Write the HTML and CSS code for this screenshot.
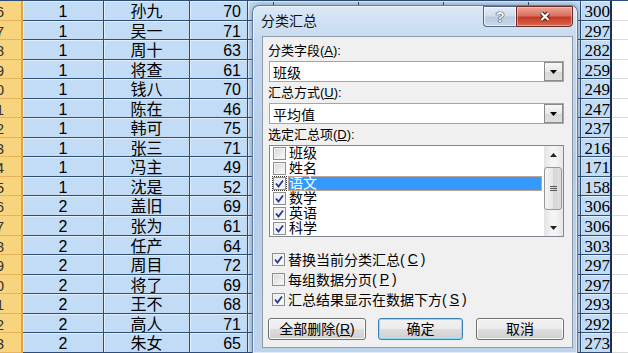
FILE: index.html
```html
<!DOCTYPE html>
<html lang="zh-CN">
<head>
    <meta charset="UTF-8">
    <title>分类汇总</title>
    <link rel="stylesheet" href="styles.css">
</head>
<body>
    <div class="sheet">
        <div class="rh">16</div><div class="c-num">1</div><div class="c-name">孙九</div><div class="c-score">70</div><div class="c-fill"></div><div class="c-total">300</div><div class="c-blank"></div>
        <div class="rh">17</div><div class="c-num">1</div><div class="c-name">吴一</div><div class="c-score">71</div><div class="c-fill"></div><div class="c-total">297</div><div class="c-blank"></div>
        <div class="rh">18</div><div class="c-num">1</div><div class="c-name">周十</div><div class="c-score">63</div><div class="c-fill"></div><div class="c-total">282</div><div class="c-blank"></div>
        <div class="rh">19</div><div class="c-num">1</div><div class="c-name">将查</div><div class="c-score">61</div><div class="c-fill"></div><div class="c-total">259</div><div class="c-blank"></div>
        <div class="rh">20</div><div class="c-num">1</div><div class="c-name">钱八</div><div class="c-score">70</div><div class="c-fill"></div><div class="c-total">249</div><div class="c-blank"></div>
        <div class="rh">21</div><div class="c-num">1</div><div class="c-name">陈在</div><div class="c-score">46</div><div class="c-fill"></div><div class="c-total">247</div><div class="c-blank"></div>
        <div class="rh">22</div><div class="c-num">1</div><div class="c-name">韩可</div><div class="c-score">75</div><div class="c-fill"></div><div class="c-total">237</div><div class="c-blank"></div>
        <div class="rh">23</div><div class="c-num">1</div><div class="c-name">张三</div><div class="c-score">71</div><div class="c-fill"></div><div class="c-total">216</div><div class="c-blank"></div>
        <div class="rh">24</div><div class="c-num">1</div><div class="c-name">冯主</div><div class="c-score">49</div><div class="c-fill"></div><div class="c-total">171</div><div class="c-blank"></div>
        <div class="rh">25</div><div class="c-num">1</div><div class="c-name">沈是</div><div class="c-score">52</div><div class="c-fill"></div><div class="c-total">158</div><div class="c-blank"></div>
        <div class="rh">26</div><div class="c-num">2</div><div class="c-name">盖旧</div><div class="c-score">69</div><div class="c-fill"></div><div class="c-total">306</div><div class="c-blank"></div>
        <div class="rh">27</div><div class="c-num">2</div><div class="c-name">张为</div><div class="c-score">61</div><div class="c-fill"></div><div class="c-total">306</div><div class="c-blank"></div>
        <div class="rh">28</div><div class="c-num">2</div><div class="c-name">任产</div><div class="c-score">64</div><div class="c-fill"></div><div class="c-total">303</div><div class="c-blank"></div>
        <div class="rh">29</div><div class="c-num">2</div><div class="c-name">周目</div><div class="c-score">72</div><div class="c-fill"></div><div class="c-total">297</div><div class="c-blank"></div>
        <div class="rh">30</div><div class="c-num">2</div><div class="c-name">将了</div><div class="c-score">69</div><div class="c-fill"></div><div class="c-total">297</div><div class="c-blank"></div>
        <div class="rh">31</div><div class="c-num">2</div><div class="c-name">王不</div><div class="c-score">68</div><div class="c-fill"></div><div class="c-total">293</div><div class="c-blank"></div>
        <div class="rh">32</div><div class="c-num">2</div><div class="c-name">高人</div><div class="c-score">71</div><div class="c-fill"></div><div class="c-total">292</div><div class="c-blank"></div>
        <div class="rh">33</div><div class="c-num">2</div><div class="c-name">朱女</div><div class="c-score">65</div><div class="c-fill"></div><div class="c-total">273</div><div class="c-blank"></div>
        <div class="rh"></div><div class="c-num"></div><div class="c-name"></div><div class="c-score"></div><div class="c-fill"></div><div class="c-total"></div><div class="c-blank"></div>
    </div>

    <div class="dialog">
        <div class="titlebar">
            <span class="title">分类汇总</span>
            <div class="caption">
                <span class="cap-help">?</span>
                <span class="cap-close">
                    <svg width="14" height="11" viewBox="0 0 14 11">
                        <path d="M3.5 2 L10.5 9 M10.5 2 L3.5 9" stroke="#4a1a12" stroke-width="4.2" fill="none"/>
                        <path d="M3.5 2 L10.5 9 M10.5 2 L3.5 9" stroke="#fff" stroke-width="2.2" fill="none"/>
                    </svg>
                </span>
            </div>
        </div>
        <div class="client">
            <div class="field-label first">分类字段(<u>A</u>):</div>
            <div class="combo">
                <span>班级</span>
                <span class="drop"><svg width="7" height="4" viewBox="0 0 7 4"><path d="M0 0 H7 L3.5 4 Z" fill="#000"/></svg></span>
            </div>
            <div class="field-label">汇总方式(<u>U</u>):</div>
            <div class="combo">
                <span>平均值</span>
                <span class="drop"><svg width="7" height="4" viewBox="0 0 7 4"><path d="M0 0 H7 L3.5 4 Z" fill="#000"/></svg></span>
            </div>
            <div class="field-label">选定汇总项(<u>D</u>):</div>
            <div class="listbox">
                <ul class="items">
                    <li><span class="cb"></span><span class="txt">班级</span></li>
                    <li><span class="cb"></span><span class="txt">姓名</span></li>
                    <li class="sel"><span class="cb on"><svg width="11" height="11" viewBox="0 0 11 11"><path d="M2 5.5 L4.5 8.5 L9 2.5" stroke="#23389a" stroke-width="1.8" fill="none"/></svg></span><span class="txt">语文</span></li>
                    <li><span class="cb on"><svg width="11" height="11" viewBox="0 0 11 11"><path d="M2 5.5 L4.5 8.5 L9 2.5" stroke="#23389a" stroke-width="1.8" fill="none"/></svg></span><span class="txt">数学</span></li>
                    <li><span class="cb on"><svg width="11" height="11" viewBox="0 0 11 11"><path d="M2 5.5 L4.5 8.5 L9 2.5" stroke="#23389a" stroke-width="1.8" fill="none"/></svg></span><span class="txt">英语</span></li>
                    <li><span class="cb on"><svg width="11" height="11" viewBox="0 0 11 11"><path d="M2 5.5 L4.5 8.5 L9 2.5" stroke="#23389a" stroke-width="1.8" fill="none"/></svg></span><span class="txt">科学</span></li>
                </ul>
                <div class="vscroll">
                    <span class="arrow"><svg width="7" height="4" viewBox="0 0 7 4"><path d="M0 4 H7 L3.5 0 Z" fill="#222"/></svg></span>
                    <span class="thumb"><svg width="7" height="7" viewBox="0 0 7 7"><path d="M0 1.5 H7 M0 3.5 H7 M0 5.5 H7" stroke="#555" stroke-width="1"/></svg></span>
                    <span class="arrow down"><svg width="7" height="4" viewBox="0 0 7 4"><path d="M0 0 H7 L3.5 4 Z" fill="#222"/></svg></span>
                </div>
            </div>
            <div class="options">
                <div class="opt"><span class="cb on"><svg width="11" height="11" viewBox="0 0 11 11"><path d="M2 5.5 L4.5 8.5 L9 2.5" stroke="#23389a" stroke-width="1.8" fill="none"/></svg></span>替换当前分类汇总(<u>C</u>)</div>
                <div class="opt"><span class="cb"></span>每组数据分页(<u>P</u>)</div>
                <div class="opt"><span class="cb on"><svg width="11" height="11" viewBox="0 0 11 11"><path d="M2 5.5 L4.5 8.5 L9 2.5" stroke="#23389a" stroke-width="1.8" fill="none"/></svg></span>汇总结果显示在数据下方(<u>S</u>)</div>
            </div>
            <div class="buttons">
                <span class="btn btn-clear">全部删除(<u>R</u>)</span>
                <span class="btn btn-ok">确定</span>
                <span class="btn btn-cancel">取消</span>
            </div>
        </div>
    </div>
</body>
</html>
```

FILE: styles.css
```css
body {
    margin: 0;
    width: 628px;
    height: 353px;
    overflow: hidden;
    position: relative;
    background: #fff;
    font-family: "Liberation Sans", "Noto Sans CJK SC", sans-serif;
}
.sheet {
    display: grid;
    grid-template-columns: 23px 81px 86px 58px 333px 31px 16px;
    grid-auto-rows: 19.55px;
    height: 353px;
    overflow: hidden;
    box-sizing: border-box;
    border-top: 1px solid #2d4d78;
}
.sheet > div {
    box-sizing: border-box;
    border-right: 1px solid #2d4d78;
    border-bottom: 1px solid #2d4d78;
    background-color: #c2dcf6;
    box-shadow: inset 1px 1px 0 #e2effc;
    font-size: 16px;
    line-height: 16px;
    padding-top: 3px;
    color: #000;
    white-space: nowrap;
    overflow: hidden;
}
.sheet > .rh {
    background: #f9d47e;
    border-right: 2px solid #e5a13a;
    border-bottom-color: #e6b45c;
    box-shadow: none;
    display: flex;
    justify-content: flex-end;
    padding-right: 17px;
    font-size: 15px;
    color: #333;
}
.c-num, .c-name {
    text-align: center;
}
.c-score {
    text-align: right;
    padding-right: 6px;
}
.sheet > .c-fill {
    background-image: linear-gradient(to right, #2d4d78 0, #2d4d78 1px, transparent 1px);
    background-size: 85px 100%;
    background-position: 25px 0;
}
.sheet > .c-total {
    text-align: right;
    font-family: "Liberation Serif", "Noto Sans CJK SC", serif;
    font-size: 17px;
    border-right: 2px solid #1b2f50;
}
.sheet > .c-blank {
    background: #fff;
    border-right: none;
    border-bottom-color: #dadada;
    box-shadow: none;
}

.dialog {
    position: absolute;
    left: 252px;
    top: 5px;
    width: 326px;
    height: 348px;
    box-sizing: border-box;
    border: 1px solid #5f7fa6;
    border-bottom: none;
    border-radius: 7px 7px 0 0;
    background: linear-gradient(180deg, #dbe8f6 0%, #c5d9ef 10%, #b5cde9 45%, #bed4ec 100%);
    box-shadow: inset 0 0 0 1px rgba(255, 255, 255, 0.55), 0 0 6px rgba(0, 0, 0, 0.35);
    color: #000;
}
.titlebar {
    display: flex;
    align-items: flex-start;
    height: 30px;
}
.title {
    margin-left: 8px;
    font-size: 14px;
    line-height: 30px;
    color: #111;
}
.caption {
    display: flex;
    margin-left: auto;
    margin-right: 4px;
}
.cap-help, .cap-close {
    height: 21px;
    box-sizing: border-box;
    display: flex;
    align-items: center;
    justify-content: center;
}
.cap-help {
    width: 33px;
    border: 1px solid #51688a;
    border-right: none;
    border-radius: 0 0 0 4px;
    background: linear-gradient(#e4ecf6 0%, #d0dcea 48%, #b9cadf 52%, #c9d7e8 100%);
    box-shadow: inset 0 0 0 1px rgba(255, 255, 255, 0.6);
    font-size: 15px;
    font-weight: bold;
    color: #f4f6f9;
    text-shadow: 0 0 1px #213652, 0 0 1px #213652, 0 0 1px #213652;
}
.cap-close {
    width: 57px;
    border: 1px solid #6b2b22;
    border-radius: 0 0 4px 0;
    background: linear-gradient(#eaa598 0%, #d9705f 45%, #c63a25 55%, #d56a50 100%);
    box-shadow: inset 0 0 0 1px rgba(255, 210, 200, 0.5);
}
.client {
    margin-left: 9px;
    width: 311px;
    height: 312px;
    box-sizing: border-box;
    border: 1px solid #8f9ba8;
    background: #f0f0f0;
    padding: 0 8px 0 6px;
}
.field-label {
    height: 21px;
    line-height: 21px;
    font-size: 13px;
    margin-left: -1px;
}
.field-label.first {
    margin-top: 3px;
}
.combo {
    height: 21px;
    box-sizing: border-box;
    border: 1px solid #a5a5a5;
    background: #fff;
    display: flex;
    align-items: center;
    padding-left: 3px;
    font-size: 14px;
}
.drop {
    margin-left: auto;
    width: 19px;
    height: 19px;
    box-sizing: border-box;
    border: 1px solid #8a8a8a;
    background: linear-gradient(#f7f7f7 0%, #e8e8e8 50%, #d8d8d8 51%, #e0e0e0 100%);
    display: flex;
    align-items: center;
    justify-content: center;
}
.listbox {
    height: 92px;
    box-sizing: border-box;
    border: 1px solid #828790;
    background: #fff;
    display: flex;
}
.items {
    flex: 1;
    margin: 0;
    padding: 0;
    list-style: none;
    overflow: hidden;
}
.items li {
    height: 15px;
    display: flex;
    align-items: center;
    padding-left: 3px;
    font-size: 14px;
}
.items .txt {
    flex: 1;
    height: 15px;
    line-height: 15px;
    margin: 0 2px;
    padding-left: 1px;
}
.items li.sel .txt {
    background: #3399ff;
    color: #fff;
    box-shadow: inset 0 0 0 1px rgba(240, 170, 110, 0.75);
}
.items li.sel .cb {
    outline: 1px dotted #333;
    outline-offset: 0;
}
.cb {
    flex: none;
    width: 13px;
    height: 13px;
    box-sizing: border-box;
    border: 1px solid #8e8f8f;
    background: linear-gradient(135deg, #d6d6d6, #fbfbfb);
    box-shadow: inset 0 0 0 1px #f2f2f2;
    display: flex;
    align-items: center;
    justify-content: center;
}
.cb.on {
    background: linear-gradient(135deg, #e8e8e8, #ffffff);
}
.vscroll {
    width: 19px;
    display: flex;
    flex-direction: column;
    background: linear-gradient(to right, #e3e3e3, #f4f4f4 40%, #f4f4f4 60%, #e6e6e6);
}
.arrow {
    height: 17px;
    display: flex;
    align-items: center;
    justify-content: center;
}
.arrow.down {
    margin-top: auto;
}
.thumb {
    margin: 4px 1px 0 0;
    height: 43px;
    box-sizing: border-box;
    border: 1px solid #979797;
    border-radius: 3px;
    background: linear-gradient(to right, #f5f5f5, #e6e6e6 50%, #d6d6d6 51%, #dedede);
    display: flex;
    align-items: center;
    justify-content: center;
}
.options {
    margin-top: 12px;
    padding-left: 3px;
}
.opt {
    display: flex;
    align-items: center;
    gap: 3px;
    height: 20px;
    font-size: 14px;
}
.buttons {
    display: flex;
    margin-top: 9px;
    margin-left: -1px;
}
.btn {
    height: 22px;
    box-sizing: border-box;
    border: 1px solid #707070;
    border-radius: 3px;
    background: linear-gradient(#f2f2f2 0%, #ebebeb 50%, #dddddd 51%, #cfcfcf 100%);
    box-shadow: inset 0 0 0 1px rgba(255, 255, 255, 0.8);
    font-size: 14px;
    line-height: 20px;
    text-align: center;
}
.btn-clear {
    width: 98px;
}
.btn-ok {
    width: 85px;
    margin-left: 12px;
    border-color: #3c7fb1;
    box-shadow: inset 0 0 0 1px #8fdcf8;
}
.btn-cancel {
    width: 88px;
    margin-left: 13px;
}
```
